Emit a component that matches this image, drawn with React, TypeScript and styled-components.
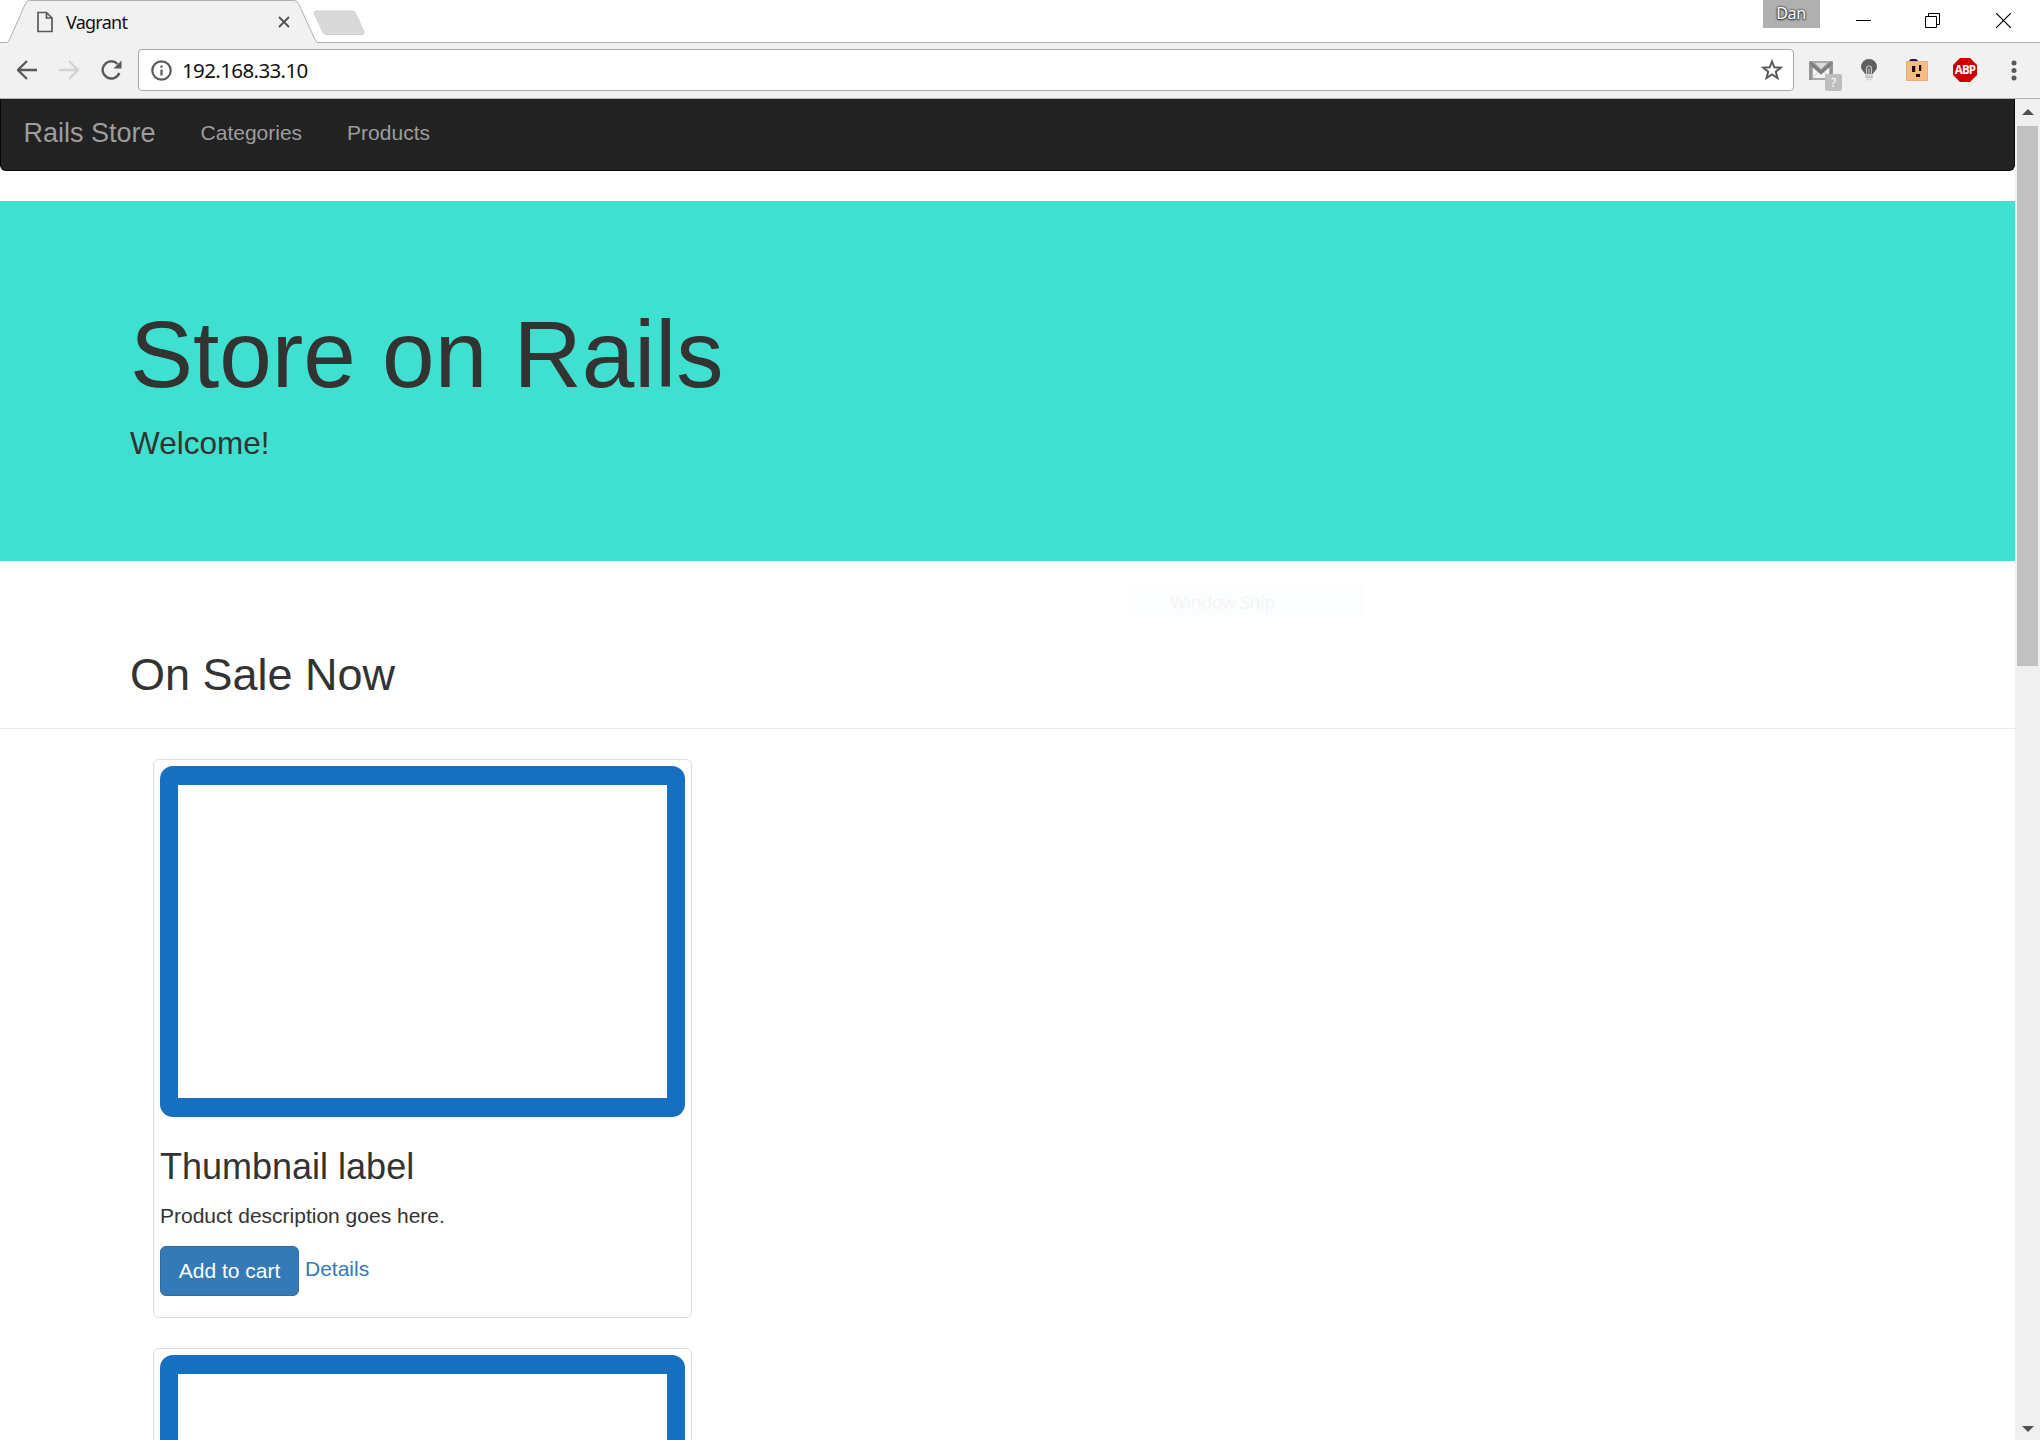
import React from "react";
import styled, { createGlobalStyle } from "styled-components";

const ui = `"Noto Sans", "Open Sans", sans-serif`;
const web = `"Liberation Sans", Arial, sans-serif`;

const GlobalStyle = createGlobalStyle`
  * { box-sizing: border-box; }
  html, body { margin: 0; padding: 0; background: #fff; }
  body { overflow: hidden; }
  h1, h2, h3, p { margin: 0; font-weight: 400; }
  svg { display: block; flex: none; }
`;

const Window = styled.div`
  position: relative;
  width: 2040px;
  height: 1440px;
  overflow: hidden;
  display: flex;
  flex-direction: column;
  background: #fff;
`;

const TitleBar = styled.header`
  height: 43px;
  display: flex;
  align-items: flex-start;
  box-shadow: inset 0 -1px 0 #b0b0b0;
`;

const Tab = styled.div`
  position: relative;
  width: 313px;
  height: 43px;
  padding-left: 36px;
  display: flex;
  align-items: center;
`;

const TabShape = styled.svg`
  position: absolute;
  left: 0;
  top: 0;
`;

const TabIcon = styled.svg`
  position: relative;
`;

const TabTitle = styled.span`
  position: relative;
  width: 212px;
  margin-left: 12px;
  font: 18px/24px ${ui};
  letter-spacing: -0.75px;
  color: #111;
`;

const NewTab = styled.svg`
  position: relative;
  margin-top: 10px;
`;

const Spacer = styled.div`
  flex: 1;
`;

const Profile = styled.div`
  width: 57px;
  height: 28px;
  background: #b0b0b0;
  color: #fff;
  text-align: center;
  font: 16px/27px ${ui};
  letter-spacing: -0.3px;
  padding-right: 1px;
  text-shadow: 0 0 2px #333, 0 0 2px #333, 0 1px 2px #333;
`;

const WindowControls = styled.div`
  display: flex;
  gap: 54px;
  padding: 13px 29px 0 36px;
`;

const CloseIcon = styled.svg`
  margin-left: 2px;
`;

const Toolbar = styled.div`
  height: 56px;
  padding: 6px 23px 7px 17px;
  display: flex;
  align-items: center;
  background: #f1f1f1;
  border-bottom: 1px solid #b3b3b3;
`;

const NavButtons = styled.div`
  display: flex;
  gap: 22px;
  width: 121px;
`;

const AddressBar = styled.div`
  width: 1656px;
  height: 42px;
  padding: 0 10px 0 12px;
  display: flex;
  align-items: center;
  background: #fff;
  border: 1px solid #a9a9a9;
  border-radius: 4px;
`;

const Url = styled.span`
  flex: 1;
  margin-left: 10px;
  font: 20.5px/28px ${ui};
  letter-spacing: -0.62px;
  color: #111;
`;

const Extensions = styled.div`
  display: flex;
  align-items: center;
  gap: 22px;
  padding-left: 14px;
`;

const Extension = styled.span`
  position: relative;
  width: 26px;
  height: 26px;
  display: grid;
  place-items: center;
`;

const ExtensionBadge = styled.span`
  position: absolute;
  left: 17px;
  top: 17px;
  width: 17px;
  height: 17px;
  border-radius: 2px;
  background: #bdbdbd;
  color: #fff;
  text-align: center;
  font: 12px/18px ${ui};
`;

const AbpBadge = styled.span`
  width: 24px;
  height: 24px;
  display: grid;
  place-items: center;
  background: #cc0000;
  clip-path: polygon(29% 0, 71% 0, 100% 29%, 100% 71%, 71% 100%, 29% 100%, 0 71%, 0 29%);
  color: #fff;
  font: 700 11.5px/24px "Open Sans", ${ui};
  letter-spacing: -0.8px;
`;

const MenuDots = styled.svg`
  margin-left: 11px;
`;

const Viewport = styled.div`
  flex: 1;
  min-height: 0;
  display: flex;
`;

const Page = styled.main`
  width: 2015px;
  overflow: hidden;
  background: #fff;
  color: #333;
  font-family: ${web};
`;

const Navbar = styled.nav`
  height: 72px;
  padding: 19px 0 0 22.5px;
  display: flex;
  gap: 45px;
  background: #222;
  border: 1px solid #080808;
  border-top: 0;
  border-radius: 0 0 6px 6px;
  color: #9d9d9d;
`;

const Brand = styled.span`
  font-size: 27px;
  line-height: 30px;
`;

const NavLink = styled.span`
  font-size: 21px;
  line-height: 30px;
`;

const Hero = styled.section`
  height: 360px;
  margin-top: 30px;
  padding: 101px 130px 0;
  background: #40e0d0;
`;

const HeroTitle = styled.h1`
  font-size: 94.5px;
  line-height: 104px;
  margin-bottom: 15px;
`;

const HeroText = styled.p`
  font-size: 31.5px;
  line-height: 45px;
`;

const SectionHeader = styled.div`
  padding: 89px 130px 28px;
  border-bottom: 1px solid #ebebeb;
`;

const SectionTitle = styled.h2`
  font-size: 45px;
  line-height: 50px;
`;

const ProductList = styled.div`
  padding: 30px 0 0 153px;
  display: flex;
  flex-direction: column;
  gap: 30px;
`;

const Card = styled.article`
  width: 539px;
  height: 559px;
  padding: 6px;
  border: 1px solid #ddd;
  border-radius: 6px;
  background: #fff;
`;

const Thumb = styled.div`
  height: 351px;
  padding: 19px 18px;
  border-radius: 13px;
  background: #176fc1;
`;

const ThumbInner = styled.div`
  height: 100%;
  background: #fff;
`;

const CardTitle = styled.h3`
  margin-top: 30px;
  font-size: 36px;
  line-height: 40px;
`;

const CardText = styled.p`
  margin-top: 14px;
  font-size: 21px;
  line-height: 30px;
`;

const Actions = styled.div`
  margin-top: 15px;
  display: flex;
  gap: 6px;
`;

const CartButton = styled.button`
  width: 139px;
  height: 50px;
  padding: 0;
  border: 1px solid #2e6da4;
  border-radius: 6px;
  background: #337ab7;
  color: #fff;
  font: 21px/30px ${web};
`;

const DetailsLink = styled.a`
  padding-top: 8px;
  color: #337ab7;
  font-size: 21px;
  line-height: 30px;
`;

const Scrollbar = styled.div`
  width: 25px;
  background: #f0f0f0;
  display: flex;
  flex-direction: column;
  align-items: center;
  padding: 10px 0 8px;
`;

const ScrollThumb = styled.div`
  width: 21px;
  height: 540px;
  margin: 11px 0 auto;
  background: #c1c1c1;
`;

const GhostMenu = styled.div`
  position: absolute;
  left: 1129px;
  top: 585px;
  width: 236px;
  height: 31px;
  padding-left: 41px;
  background: #fbfdff;
  color: #f4f5f5;
  font: 18px/34px ${ui};
  letter-spacing: -0.4px;
`;

const Arrow = ({ color, flip }: { color: string; flip?: boolean }) => (
  <svg width="20" height="20" viewBox="0 0 20 20" fill="none" stroke={color} strokeWidth="2.3">
    <path d={flip ? "M0 10H18M10 1l9 9-9 9" : "M20 10H2M10 1l-9 9 9 9"} />
  </svg>
);

const Product = ({ title, text }: { title?: string; text?: string }) => (
  <Card>
    <Thumb><ThumbInner /></Thumb>
    {title && (
      <>
        <CardTitle>{title}</CardTitle>
        <CardText>{text}</CardText>
        <Actions>
          <CartButton>Add to cart</CartButton>
          <DetailsLink>Details</DetailsLink>
        </Actions>
      </>
    )}
  </Card>
);

export default function App() {
  return (
    <Window>
      <GlobalStyle />
      <TitleBar>
        <Tab>
          <TabShape width="322" height="43" viewBox="0 0 322 43">
            <path d="M5 44Q8 42.500 9.500 39.500L25.500 3.500Q27 .500 29.500 .500H294.500Q297 .500 298.500 3.500L315 39.500Q316.500 42.500 320 44Z" fill="#f1f1f1" stroke="#b0b0b0" />
          </TabShape>
          <TabIcon width="18" height="22" viewBox="0 0 18 22" fill="none" stroke="#5a5a5a" strokeWidth="1.7">
            <path d="M2 1.500H10.500L16 7V20.500H2ZM10.500 1.500V7H16" />
          </TabIcon>
          <TabTitle>Vagrant</TabTitle>
          <TabIcon width="12" height="12" viewBox="0 0 12 12" stroke="#505050" strokeWidth="1.8">
            <path d="M1 1L11 11M11 1L1 11" />
          </TabIcon>
        </Tab>
        <NewTab width="52" height="27" viewBox="0 0 52 27">
          <path d="M3 1H39Q41.500 1 42.500 3L51 22Q51.500 24.500 49 24.500H14Q11 24.500 10 22.500L1.500 4Q.500 1 3 1Z" fill="#d9d9d9" stroke="#d0d0d0" />
        </NewTab>
        <Spacer />
        <Profile>Dan</Profile>
        <WindowControls>
          <svg width="15" height="15"><path d="M0 7.500H15" stroke="#000" /></svg>
          <svg width="15" height="15" fill="none" stroke="#000"><path d="M.500 3.500H11.500V14.500H.500ZM3.500 3.500V.500H14.500V11.500H11.500" /></svg>
          <CloseIcon width="15" height="15" stroke="#000" strokeWidth="1.2"><path d="M0 0L15 15M15 0L0 15" /></CloseIcon>
        </WindowControls>
      </TitleBar>
      <Toolbar>
        <NavButtons>
          <Arrow color="#5a5a5a" />
          <Arrow color="#d2d2d2" flip />
          <svg width="22" height="20" viewBox="0 0 22 20" fill="none" stroke="#5a5a5a" strokeWidth="2.400">
            <path d="M18.300 13A8.600 8.600 0 1 1 16.500 4" />
            <path d="M20.500 .500V8.500H12.500Z" fill="#5a5a5a" stroke="none" />
          </svg>
        </NavButtons>
        <AddressBar>
          <svg width="21" height="21" viewBox="0 0 21 21" fill="none" stroke="#5a5a5a" strokeWidth="2.200">
            <circle cx="10.500" cy="10.500" r="9.200" />
            <path d="M10.500 9.500V15.500M10.500 5.500V7.700" />
          </svg>
          <Url>192.168.33.10</Url>
          <svg width="22" height="22" viewBox="0 0 22 22" fill="none" stroke="#5a5a5a" strokeWidth="2">
            <path d="M11 2.500L13.300 8.300L19.700 8.700L14.800 12.700L16.500 19L11 15.500L5.500 19L7.200 12.700L2.300 8.700L8.700 8.300Z" />
          </svg>
        </AddressBar>
        <Extensions>
          <Extension>
            <svg width="24" height="19" viewBox="0 0 24 19">
              <path d="M0 0H24V19H0Z" fill="#a9a9a9" />
              <path d="M4 4L12 12L20 4V17H4Z" fill="#f4f4f4" />
              <path d="M6 2H18L12 8Z" fill="#dcdcdc" />
              <path d="M4 17L9.500 10.500M20 17L14.500 10.500" stroke="#cfcfcf" />
              <path d="M1 1.500L12 11.500L23 1.500" fill="none" stroke="#7d7d7d" strokeWidth="3.500" />
              <path d="M1.500 2V19M22.500 2V19" stroke="#8f8f8f" strokeWidth="2" />
            </svg>
            <ExtensionBadge>?</ExtensionBadge>
          </Extension>
          <Extension>
            <svg width="16" height="22" viewBox="0 0 16 22">
              <path d="M8 0A8 8 0 0 1 16 8C16 11 13 12.500 12 15H4C3 12.500 0 11 0 8A8 8 0 0 1 8 0Z" fill="#606060" />
              <path d="M5.500 15V9.500Q5.500 7 8 7Q10.500 7 10.500 9.500V15M8 9.500V15" fill="none" stroke="#c8c8c8" strokeWidth="1.200" />
              <path d="M4 15.500H12V19H4Z" fill="#bcbcbc" />
              <path d="M4 17H12M5 20.500H11" stroke="#d6d6d6" strokeWidth="1.500" />
            </svg>
          </Extension>
          <Extension>
            <svg width="22" height="22" viewBox="0 0 22 22">
              <path d="M3 3Q3 0 6 0H9Q12 0 12 3Z" fill="#15155f" />
              <path d="M0 2H22V22H0Z" fill="#f6bd83" />
              <path d="M.500 2.500H21.500V21.500H.500Z" fill="none" stroke="#e6ad78" />
              <path d="M6 7H9V13H6ZM13 6H15V12H13ZM10 15H14V18H10Z" fill="#130d08" />
              <path d="M9 7H10V13H9ZM15 6H16V12H15Z" fill="#d98e4f" />
            </svg>
          </Extension>
          <Extension><AbpBadge>ABP</AbpBadge></Extension>
          <MenuDots width="6" height="21" viewBox="0 0 6 21" fill="#5a5a5a">
            <circle cx="3" cy="3" r="2.500" /><circle cx="3" cy="10.500" r="2.500" /><circle cx="3" cy="18" r="2.500" />
          </MenuDots>
        </Extensions>
      </Toolbar>
      <Viewport>
        <Page>
          <Navbar>
            <Brand>Rails Store</Brand>
            <NavLink>Categories</NavLink>
            <NavLink>Products</NavLink>
          </Navbar>
          <Hero>
            <HeroTitle>Store on Rails</HeroTitle>
            <HeroText>Welcome!</HeroText>
          </Hero>
          <SectionHeader><SectionTitle>On Sale Now</SectionTitle></SectionHeader>
          <ProductList>
            <Product title="Thumbnail label" text="Product description goes here." />
            <Product />
          </ProductList>
        </Page>
        <Scrollbar>
          <svg width="12" height="6" viewBox="0 0 12 6"><path d="M6 0L12 6H0Z" fill="#505050" /></svg>
          <ScrollThumb />
          <svg width="12" height="6" viewBox="0 0 12 6"><path d="M0 0H12L6 6Z" fill="#505050" /></svg>
        </Scrollbar>
      </Viewport>
      <GhostMenu>Window Snip</GhostMenu>
    </Window>
  );
}
